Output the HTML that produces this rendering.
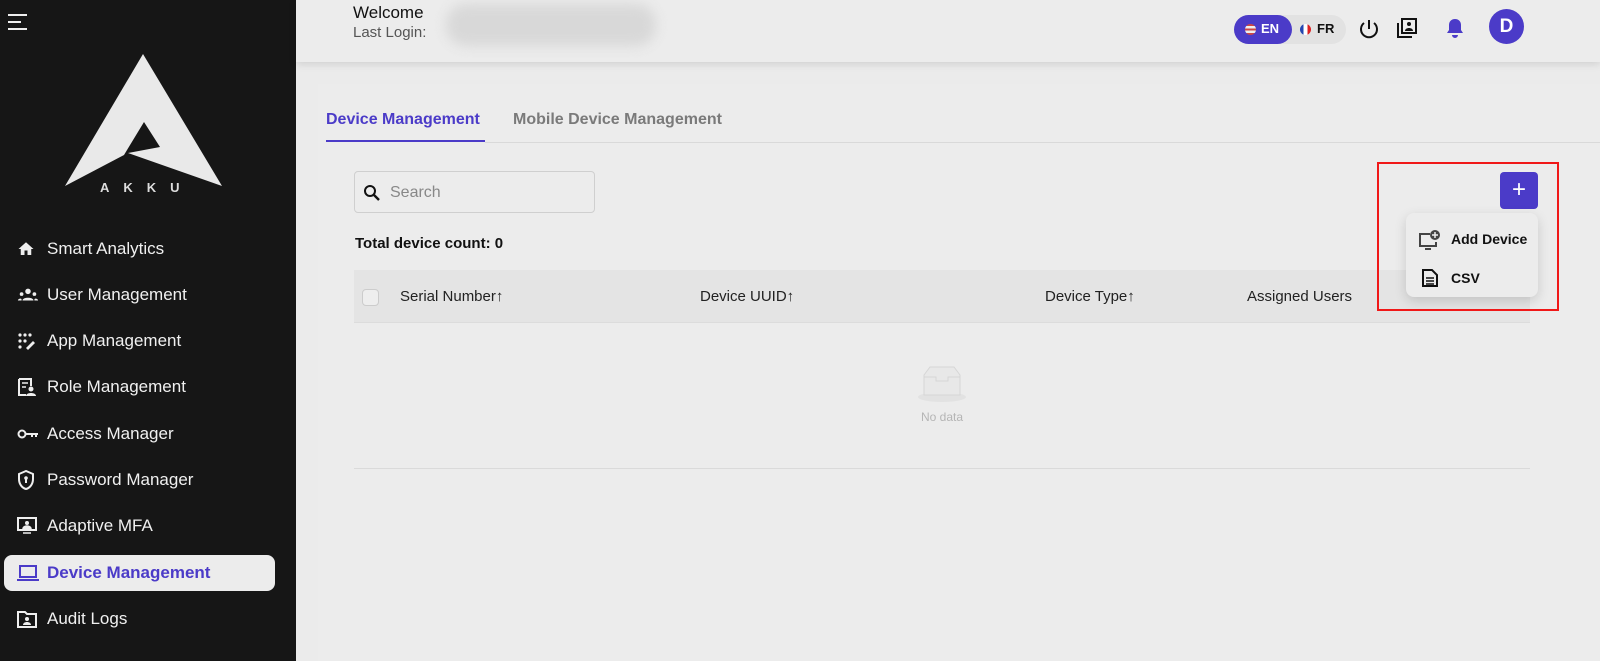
<!DOCTYPE html>
<html><head><meta charset="utf-8"><style>
*{margin:0;padding:0;box-sizing:border-box}
body{width:1600px;height:661px;overflow:hidden;background:#ebebeb;font-family:"Liberation Sans",sans-serif;position:relative}
.side{position:absolute;left:0;top:0;width:296px;height:661px;background:#161616;color:#f0f0f0}
.nav{position:absolute;left:0;width:296px;height:36px;display:flex;align-items:center;font-size:17px}
.nav svg{position:absolute;left:17px}
.nav span{position:absolute;left:47px}
.nav.act{left:4px;width:271px;background:#ececec;border-radius:8px;color:#4b3bc8}
.nav.act svg{left:13px}.nav.act span{left:43px}
.hdr{position:absolute;left:296px;top:0;right:0;height:62px;background:#ececec;box-shadow:0 2px 8px rgba(0,0,0,.12)}
.card{position:absolute;left:318px;top:84px;right:0;bottom:0;background:#ececec}
.t{position:absolute;white-space:nowrap}
</style></head><body>
<div class="side">
 <div style="position:absolute;left:8px;top:14px;width:19px;height:2px;background:#eee"></div>
 <div style="position:absolute;left:8px;top:21px;width:13px;height:2px;background:#eee"></div>
 <div style="position:absolute;left:8px;top:28px;width:19px;height:2px;background:#eee"></div>
 <svg style="position:absolute;left:0;top:0" width="296" height="200" viewBox="0 0 296 200">
  <path d="M143 54 L222 186 L128 153 L160 147 L144 122 L124 155 L65 186 Z" fill="#e9e9e9"/>
 </svg>
 <div class="t" style="left:100px;top:180px;font-size:13px;letter-spacing:14px;font-weight:bold;color:#ddd">AKKU</div>
 <div class="nav" style="top:231px"><svg width="18" height="18" viewBox="0 0 24 24"><path d="M10 20v-6h4v6h5v-8h3L12 3 2 12h3v8z" fill="#eee"/></svg><span>Smart Analytics</span></div>
 <div class="nav" style="top:277px"><svg width="22" height="16" viewBox="0 0 24 16"><circle cx="12" cy="4" r="3" fill="#eee"/><circle cx="5" cy="7" r="2" fill="#eee"/><circle cx="19" cy="7" r="2" fill="#eee"/><path d="M6 14c0-4 12-4 12 0z M1 14c0-2 4-3 4-1v1z M23 14c0-2-4-3-4-1v1z" fill="#eee"/></svg><span>User Management</span></div>
 <div class="nav" style="top:323px"><svg width="20" height="18" viewBox="0 0 20 18"><g fill="#eee"><circle cx="3" cy="3" r="1.6"/><circle cx="8" cy="3" r="1.6"/><circle cx="13" cy="3" r="1.6"/><circle cx="3" cy="9" r="1.6"/><circle cx="8" cy="9" r="1.6"/><circle cx="3" cy="15" r="1.6"/></g><path d="M9 16l7-7 2 2-7 7z" fill="#eee"/></svg><span>App Management</span></div>
 <div class="nav" style="top:369px"><svg width="20" height="20" viewBox="0 0 20 20"><path d="M2 2h12v7M2 2v16h7" stroke="#eee" stroke-width="2" fill="none"/><path d="M5 6h6M5 10h4" stroke="#eee" stroke-width="1.6"/><circle cx="14" cy="12" r="2.5" fill="#eee"/><path d="M9 19c0-4 10-4 10 0z" fill="#eee"/></svg><span>Role Management</span></div>
 <div class="nav" style="top:416px"><svg width="22" height="12" viewBox="0 0 22 12"><circle cx="5" cy="6" r="3.5" stroke="#eee" stroke-width="2" fill="none"/><path d="M9 6h12M15 6v3M19 6v3" stroke="#eee" stroke-width="2"/></svg><span>Access Manager</span></div>
 <div class="nav" style="top:462px"><svg width="18" height="20" viewBox="0 0 18 20"><path d="M9 1L2 4v5c0 5 3 9 7 10 4-1 7-5 7-10V4z" stroke="#eee" stroke-width="2" fill="none"/><circle cx="9" cy="8" r="1.8" fill="#eee"/><path d="M9 9v4" stroke="#eee" stroke-width="2"/></svg><span>Password Manager</span></div>
 <div class="nav" style="top:508px"><svg width="20" height="18" viewBox="0 0 20 18"><rect x="1" y="1" width="18" height="12" stroke="#eee" stroke-width="2" fill="none"/><circle cx="10" cy="6" r="2" fill="#eee"/><path d="M6 12c0-4 8-4 8 0z M6 16h8" fill="#eee" stroke="#eee" stroke-width="1.5"/></svg><span>Adaptive MFA</span></div>
 <div class="nav act" style="top:555px"><svg width="22" height="18" viewBox="0 0 22 18"><rect x="3" y="2" width="16" height="11" stroke="#4b3bc8" stroke-width="2" fill="none"/><path d="M0 16h22" stroke="#4b3bc8" stroke-width="2"/></svg><span style="font-weight:bold">Device Management</span></div>
 <div class="nav" style="top:601px"><svg width="20" height="18" viewBox="0 0 20 18"><path d="M1 2h7l2 2h9v13H1z" stroke="#eee" stroke-width="2" fill="none"/><circle cx="10" cy="9" r="2" fill="#eee"/><path d="M6 15c0-4 8-4 8 0z" fill="#eee"/></svg><span>Audit Logs</span></div>
</div>
<div class="hdr">
 <div class="t" style="left:57px;top:3px;font-size:17px;color:#111">Welcome</div>
 <div class="t" style="left:57px;top:24px;font-size:15px;color:#555">Last Login:</div>
 <div style="position:absolute;left:150px;top:4px;width:210px;height:42px;border-radius:20px;background:#d8d8d8;filter:blur(6px)"></div>
 <div style="position:absolute;left:938px;top:15px;width:112px;height:29px;border-radius:15px;background:#e2e2e2"></div>
 <div style="position:absolute;left:938px;top:15px;width:58px;height:29px;border-radius:15px;background:#4b3bc8"></div>
 <div style="position:absolute;left:949px;top:24px;width:11px;height:11px;border-radius:50%;background:linear-gradient(#c44 0 20%,#eee 20% 40%,#c44 40% 60%,#eee 60% 80%,#c44 80%)"></div>
 <div class="t" style="left:965px;top:21px;font-size:13px;font-weight:bold;color:#fff">EN</div>
 <div style="position:absolute;left:1004px;top:24px;width:11px;height:11px;border-radius:50%;background:linear-gradient(90deg,#2446b0 0 33%,#fff 33% 66%,#d22 66%)"></div>
 <div class="t" style="left:1021px;top:21px;font-size:13px;font-weight:bold;color:#111">FR</div>
 <svg style="position:absolute;left:1062px;top:18px" width="22" height="22" viewBox="0 0 22 22"><path d="M6 5a8 8 0 1 0 10 0" stroke="#111" stroke-width="2" fill="none"/><path d="M11 2v9" stroke="#111" stroke-width="2"/></svg>
 <svg style="position:absolute;left:1101px;top:18px" width="20" height="20" viewBox="0 0 20 20"><rect x="5" y="1" width="14" height="14" stroke="#111" stroke-width="2" fill="none"/><path d="M1 5v14h14" stroke="#111" stroke-width="2" fill="none"/><circle cx="12" cy="6" r="2" fill="#111"/><path d="M8 13c0-4 8-4 8 0z" fill="#111"/></svg>
 <svg style="position:absolute;left:1150px;top:18px" width="18" height="20" viewBox="0 0 18 20"><path d="M9 1c-4 0-6 3-6 6v5l-2 3h16l-2-3V7c0-3-2-6-6-6z M6 17h6a3 3 0 0 1-6 0z" fill="#4b3bc8"/></svg>
 <div style="position:absolute;left:1193px;top:9px;width:35px;height:35px;border-radius:50%;background:#4b3bc8;color:#fff;font-size:19px;font-weight:bold;text-align:center;line-height:35px">D</div>
</div>
<div class="card">
 <div class="t" style="left:8px;top:27px;font-size:16px;font-weight:bold;color:#4b3bc8">Device Management</div>
 <div style="position:absolute;left:8px;top:56px;width:159px;height:2px;background:#4b3bc8"></div>
 <div class="t" style="left:195px;top:27px;font-size:16px;font-weight:bold;color:#7a7a7a">Mobile Device Management</div>
 <div style="position:absolute;left:167px;top:58px;right:0;height:1px;background:#d9d9d9"></div>
 <div style="position:absolute;left:36px;top:87px;width:241px;height:42px;border:1px solid #cfcfcf;border-radius:4px"></div>
 <svg style="position:absolute;left:45px;top:100px" width="18" height="18" viewBox="0 0 18 18"><circle cx="7" cy="7" r="5" stroke="#111" stroke-width="2" fill="none"/><path d="M11 11l5 5" stroke="#111" stroke-width="2.4"/></svg>
 <div class="t" style="left:72px;top:100px;font-size:16px;color:#888">Search</div>
 <div class="t" style="left:37px;top:151px;font-size:15px;font-weight:bold;color:#111">Total device count: 0</div>
 <div style="position:absolute;left:36px;top:186px;width:1176px;height:53px;background:#e4e4e4;border-bottom:1px solid #dcdcdc"></div>
 <div style="position:absolute;left:44px;top:205px;width:17px;height:17px;border:1px solid #ccc;border-radius:4px;background:#eee"></div>
 <div class="t" style="left:82px;top:204px;font-size:15px;color:#222">Serial Number↑</div>
 <div class="t" style="left:382px;top:204px;font-size:15px;color:#222">Device UUID↑</div>
 <div class="t" style="left:727px;top:204px;font-size:15px;color:#222">Device Type↑</div>
 <div class="t" style="left:929px;top:204px;font-size:15px;color:#222">Assigned Users</div>
 <svg style="position:absolute;left:594px;top:281px" width="60" height="38" viewBox="0 0 60 38"><ellipse cx="30" cy="32" rx="24" ry="5" fill="#e2e2e2"/><path d="M12 10l6-8h24l6 8v20H12z" fill="#e8e8e8" stroke="#d6d6d6"/><path d="M12 12h12v4h12v-4h12" stroke="#d6d6d6" fill="none"/></svg>
 <div class="t" style="left:603px;top:326px;font-size:12px;color:#b5b5b5">No data</div>
 <div style="position:absolute;left:36px;top:384px;width:1176px;height:1px;background:#dadada"></div>
 <div style="position:absolute;left:1182px;top:88px;width:38px;height:37px;background:#4b3bc8;border-radius:4px;color:#fff;font-size:24px;text-align:center;line-height:36px">+</div>
 <div style="position:absolute;left:1088px;top:129px;width:132px;height:84px;background:#ececec;border-radius:8px;box-shadow:0 4px 12px rgba(0,0,0,.15)"></div>
 <svg style="position:absolute;left:1100px;top:145px" width="22" height="22" viewBox="0 0 22 22"><path d="M12 5H2v12h16v-4" stroke="#444" stroke-width="2" fill="none"/><path d="M7 20h6" stroke="#444" stroke-width="2"/><circle cx="17" cy="6" r="5" fill="#444"/><path d="M17 3v6M14 6h6" stroke="#eee" stroke-width="1.5"/></svg>
 <div class="t" style="left:1133px;top:147px;font-size:14px;font-weight:bold;color:#111">Add Device</div>
 <svg style="position:absolute;left:1104px;top:185px" width="16" height="18" viewBox="0 0 16 18"><path d="M1 1h9l5 5v11H1z" stroke="#111" stroke-width="2" fill="none"/><path d="M4 9h8M4 12h8M4 15h8" stroke="#111" stroke-width="1.4"/></svg>
 <div class="t" style="left:1133px;top:186px;font-size:14px;font-weight:bold;color:#111">CSV</div>
 <div style="position:absolute;left:1059px;top:78px;width:182px;height:149px;border:2px solid #f01818"></div>
</div>
</body></html>
